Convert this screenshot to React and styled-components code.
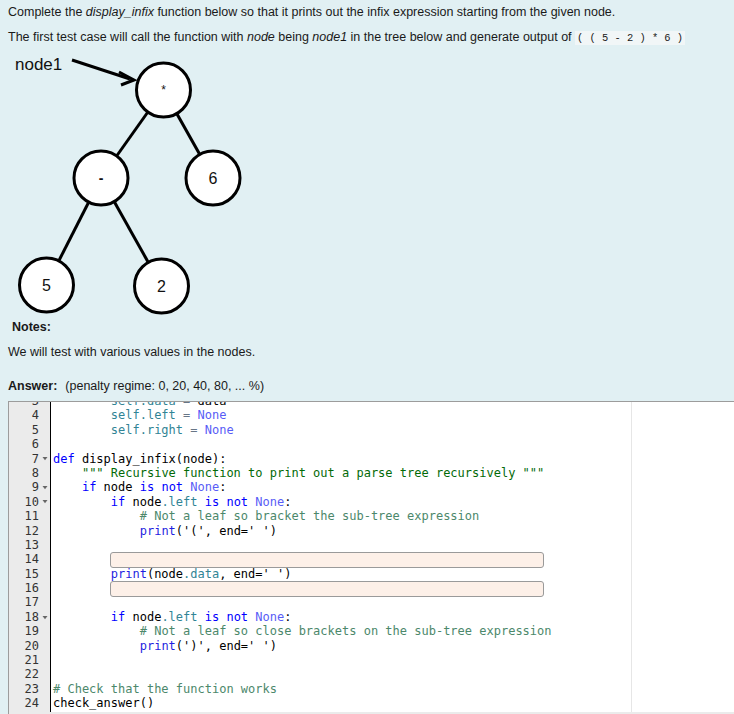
import React from "react";
import styled, { createGlobalStyle } from "styled-components";

const Global = createGlobalStyle`
  html, body { margin: 0; padding: 0; background: #e1f0f3; overflow: hidden; }
  body { font-family: "Liberation Sans", Arial, sans-serif; font-size: 12.5px; color: #1a1a1a; }
`;

const Page = styled.div`
  padding: 4px 0 0 8px;
  width: 726px;
`;

const Para = styled.p`
  margin: ${(p) => p.$mt || 0}px 0 0 ${(p) => p.$ml || 0}px;
  line-height: 17px;
  white-space: nowrap;
`;

const InlineCode = styled.code`
  font-family: "Liberation Mono", monospace;
  font-size: 10.4px;
  background: #f1f6f7;
  padding: 1px 2px;
`;

const Diagram = styled.svg`
  display: block;
  margin: 1px 0 0 -8px;
`;

const Bold = styled.b`
  font-weight: 700;
`;

const Penalty = styled.span`
  margin-left: 8px;
`;

const Editor = styled.div`
  margin-top: 6px;
  width: 726px;
  border-top: 1px solid #9c9c9c;
  border-left: 1px solid #9c9c9c;
  box-sizing: border-box;
  background: #fff;
  display: flex;
  flex-direction: column;
`;

const EditorBody = styled.div`
  height: 310px;
  overflow: hidden;
  display: flex;
  position: relative;
`;

const Gutter = styled.div`
  width: 41px;
  background: #ebebeb;
  border-right: 1px solid #000;
  flex-shrink: 0;
`;

const Scroller = styled.div`
  margin-top: -8px;
  font-family: "DejaVu Sans Mono", monospace;
  font-size: 12px;
`;

const GutterRow = styled.div`
  height: 14.4px;
  line-height: 14.4px;
  display: flex;
  justify-content: flex-end;
  color: #333;
`;

const Fold = styled.span`
  width: 11px;
  display: flex;
  align-items: center;
  justify-content: center;
`;

const Code = styled.div`
  flex: 1;
  position: relative;
  padding-left: 2px;
  overflow: hidden;
`;

const PrintMargin = styled.div`
  position: absolute;
  top: 0;
  bottom: 0;
  left: calc(2px + 80ch);
  width: 1px;
  background: #e6e6e6;
  font-family: "DejaVu Sans Mono", monospace;
  font-size: 12px;
`;

const Line = styled.div`
  height: 14.4px;
  line-height: 14.4px;
  white-space: pre;
  color: #000;
  position: relative;
`;

const Slot = styled.div`
  margin-left: 57px;
  width: 434px;
  height: 15.5px;
  box-sizing: border-box;
  border: 1px solid #9a9a9a;
  border-radius: 3px;
  background: #fdf0e8;
`;

const Tok = styled.span`
  color: ${(p) => p.$c};
`;

const ScrollTrack = styled.div`
  height: 8px;
  background: #ebebeb;
`;

const C = {
  kw: "#0000ff",
  fn: "#1f1fe0",
  none: "#585cf6",
  self: "#318495",
  op: "#687687",
  com: "#4c886b",
  str: "#036a07",
};

const K = ({ c, children }) => <Tok $c={C[c]}>{children}</Tok>;

const lines = [
  { n: 3, code: <>{"        "}<K c="self">self.data</K> <K c="op">=</K> data</> },
  { n: 4, code: <>{"        "}<K c="self">self.left</K> <K c="op">=</K> <K c="none">None</K></> },
  { n: 5, code: <>{"        "}<K c="self">self.right</K> <K c="op">=</K> <K c="none">None</K></> },
  { n: 6, code: "" },
  { n: 7, fold: true, code: <><K c="kw">def</K> display_infix(node):</> },
  { n: 8, code: <>{"    "}<K c="str">{'""" Recursive function to print out a parse tree recursively """'}</K></> },
  { n: 9, fold: true, code: <>{"    "}<K c="kw">if</K> node <K c="kw">is</K> <K c="kw">not</K> <K c="none">None</K>:</> },
  { n: 10, fold: true, code: <>{"        "}<K c="kw">if</K> node<K c="self">.left</K> <K c="kw">is</K> <K c="kw">not</K> <K c="none">None</K>:</> },
  { n: 11, code: <>{"            "}<K c="com"># Not a leaf so bracket the sub-tree expression</K></> },
  { n: 12, code: <>{"            "}<K c="fn">print</K>('(', end=' ')</> },
  { n: 13, code: "" },
  { n: 14, slot: true },
  { n: 15, code: <>{"        "}<K c="fn">print</K>(node<K c="self">.data</K>, end=' ')</> },
  { n: 16, slot: true },
  { n: 17, code: "" },
  { n: 18, fold: true, code: <>{"        "}<K c="kw">if</K> node<K c="self">.left</K> <K c="kw">is</K> <K c="kw">not</K> <K c="none">None</K>:</> },
  { n: 19, code: <>{"            "}<K c="com"># Not a leaf so close brackets on the sub-tree expression</K></> },
  { n: 20, code: <>{"            "}<K c="fn">print</K>(')', end=' ')</> },
  { n: 21, code: "" },
  { n: 22, code: "" },
  { n: 23, code: <K c="com"># Check that the function works</K> },
  { n: 24, code: "check_answer()" },
];

const FoldArrow = () => (
  <svg width="6" height="5" viewBox="0 0 6 5">
    <path d="M0.5 1 L5.5 1 L3 4.2 Z" fill="#666" />
  </svg>
);

const nodes = [
  { x: 163.5, y: 42, t: "*", s: 12 },
  { x: 101, y: 130, t: "-", s: 14 },
  { x: 213, y: 130, t: "6", s: 16 },
  { x: 46.5, y: 237, t: "5", s: 16 },
  { x: 161.5, y: 238, t: "2", s: 16 },
];

const edges = [
  [0, 1],
  [0, 2],
  [1, 3],
  [1, 4],
];

const TreeDiagram = () => (
  <Diagram width="260" height="270" viewBox="0 0 260 270">
    <text x="15" y="22" fontSize="17" fontFamily="Liberation Sans, Arial, sans-serif" fill="#111">
      node1
    </text>
    <line x1="72" y1="12" x2="130" y2="31" stroke="#000" strokeWidth="3" />
    <path d="M119 24 L134 32 L121 37" fill="none" stroke="#000" strokeWidth="3" strokeLinejoin="miter" />
    {edges.map(([a, b], i) => (
      <line key={i} x1={nodes[a].x} y1={nodes[a].y} x2={nodes[b].x} y2={nodes[b].y} stroke="#000" strokeWidth="3" />
    ))}
    {nodes.map((n, i) => (
      <g key={i}>
        <circle cx={n.x} cy={n.y} r="27" fill="#fff" stroke="#000" strokeWidth="3" />
        <text
          x={n.x}
          y={n.y + n.s * 0.36}
          fontSize={n.s}
          fontWeight={n.t === "-" ? 700 : 400}
          textAnchor="middle"
          fontFamily="Liberation Sans, Arial, sans-serif"
          fill="#111"
        >
          {n.t}
        </text>
      </g>
    ))}
  </Diagram>
);

export default function App() {
  return (
    <>
      <Global />
      <Page>
        <Para>
          Complete the <i>display_infix</i> function below so that it prints out the infix expression starting from the given node.
        </Para>
        <Para $mt={8}>
          The first test case will call the function with <i>node</i> being <i>node1</i> in the tree below and generate output of{" "}
          <InlineCode>( ( 5 - 2 ) * 6 )</InlineCode>
        </Para>
        <TreeDiagram />
        <Para $mt={1} $ml={4}>
          <Bold>Notes:</Bold>
        </Para>
        <Para $mt={8}>We will test with various values in the nodes.</Para>
        <Para $mt={17}>
          <Bold>Answer:</Bold>
          <Penalty>(penalty regime: 0, 20, 40, 80, ... %)</Penalty>
        </Para>
        <Editor>
          <EditorBody>
            <Gutter>
              <Scroller>
                {lines.map((l) => (
                  <GutterRow key={l.n}>
                    {l.n}
                    <Fold>{l.fold ? <FoldArrow /> : null}</Fold>
                  </GutterRow>
                ))}
              </Scroller>
            </Gutter>
            <Code>
              <PrintMargin />
              <Scroller>
                {lines.map((l) => (
                  <Line key={l.n}>{l.slot ? <Slot /> : l.code}</Line>
                ))}
              </Scroller>
            </Code>
          </EditorBody>
          <ScrollTrack />
        </Editor>
      </Page>
    </>
  );
}
